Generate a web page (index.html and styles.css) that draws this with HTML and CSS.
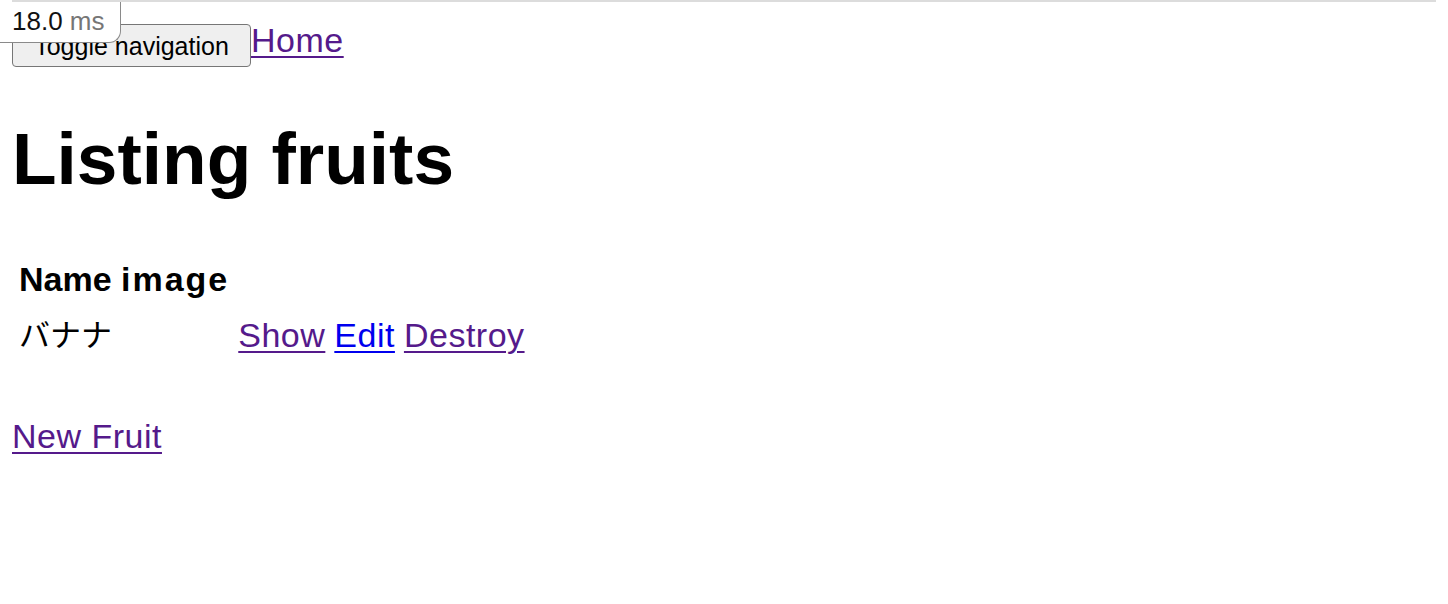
FILE: index.html
```html
<!DOCTYPE html>
<html lang="ja">
<head>
<meta charset="utf-8">
<title>Fruits</title>
<link rel="stylesheet" href="styles.css">
</head>
<body>
<div class="topline"></div>
<div class="profiler">18.0 <span class="unit">ms</span></div>
<nav class="nav"><button class="toggle" type="button">Toggle navigation</button><a class="link visited" href="#">Home</a></nav>
<h1 class="title">Listing fruits</h1>
<table class="list">
  <thead>
    <tr><th class="col-name">Name</th><th class="col-image">image</th><th colspan="3"></th></tr>
  </thead>
  <tbody>
    <tr>
      <td class="jp">バナナ</td>
      <td></td>
      <td><a class="link visited" href="#">Show</a></td>
      <td><a class="link fresh" href="#">Edit</a></td>
      <td><a class="link visited" href="#">Destroy</a></td>
    </tr>
  </tbody>
</table>
<p class="new"><a class="link visited" href="#">New Fruit</a></p>
</body>
</html>
```
FILE: styles.css
```css
html, body {
  background: #ffffff;
}
body {
  margin: 0 12px;
  font-family: "Liberation Sans", "Noto Sans CJK JP", sans-serif;
  font-size: 34px;
  letter-spacing: 0.5px;
  line-height: 47px;
  color: #000000;
}
.topline {
  height: 2px;
  background: #dcdcdc;
  margin: 0 -12px;
}
.profiler {
  position: absolute;
  top: 2px;
  left: 0;
  width: 121px;
  height: 41px;
  box-sizing: border-box;
  padding-left: 12px;
  background: #ffffff;
  border: 1px solid #8a8a8a;
  border-top: none;
  border-left: none;
  border-bottom-right-radius: 12px;
  font-size: 26px;
  letter-spacing: 0;
  line-height: 39px;
  color: #111111;
  z-index: 2;
}
.profiler .unit {
  color: #767676;
}
.nav {
  margin-top: 15px;
}
.toggle {
  font-family: "Liberation Sans", sans-serif;
  font-size: 25px;
  letter-spacing: 0;
  line-height: 30px;
  padding: 6px 19px 5px;
  margin: 0;
  vertical-align: -3px;
  border: 1px solid #767676;
  border-radius: 4px;
  background: #efefef;
  color: #000000;
  width: 239px;
}
.link {
  text-decoration: underline;
  text-decoration-thickness: 2px;
  text-underline-offset: 4px;
}
.visited {
  color: #551a8b;
}
.fresh {
  color: #0000ee;
}
.title {
  font-size: 73px;
  letter-spacing: 0;
  line-height: 88px;
  font-weight: bold;
  margin: 48px 0 46px;
}
.list {
  border-spacing: 5px;
}
.list th, .list td {
  padding: 2px;
  text-align: left;
}
.list th {
  font-weight: bold;
}
.list .col-name {
  letter-spacing: 0;
}
.list .col-image {
  letter-spacing: 2px;
}
.list .jp {
  font-size: 31px;
  letter-spacing: 0;
}
.new {
  margin: 47px 0 0;
}
```
